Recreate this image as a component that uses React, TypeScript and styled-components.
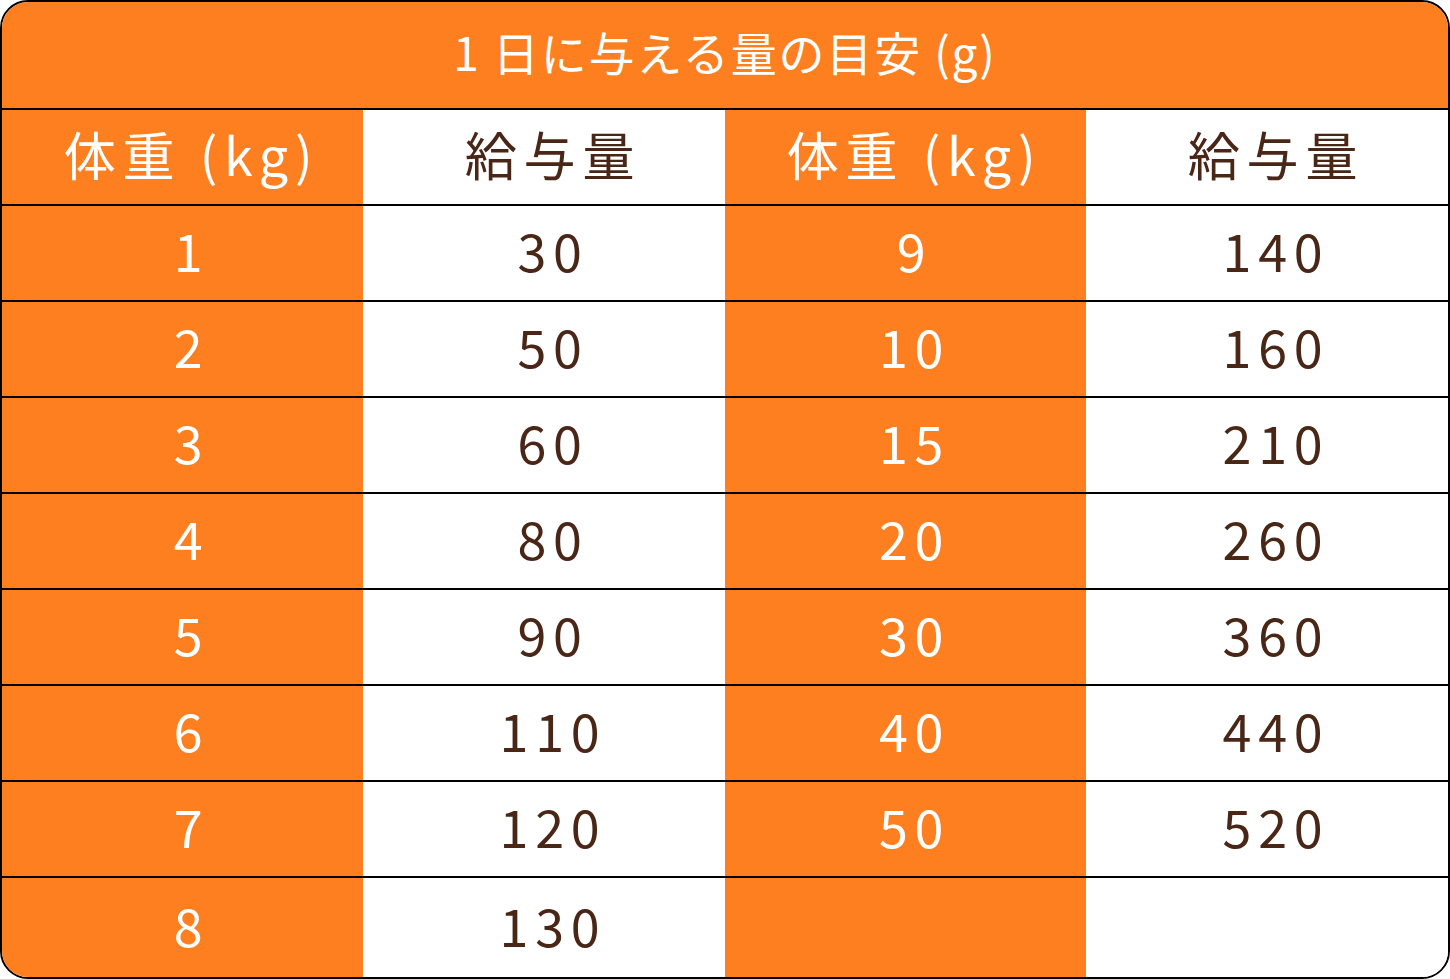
import styled, { createGlobalStyle } from "styled-components";

const GlobalStyle = createGlobalStyle`
  html, body {
    margin: 0;
    padding: 0;
    background: #ffffff;
  }
  body {
    font-family: "Noto Sans CJK JP", "Noto Sans", sans-serif;
  }
`;

const ORANGE = "#fe7f1f";
const BROWN = "#4a2616";

type Row = {
  weightA: string;
  amountA: string;
  weightB: string;
  amountB: string;
};

const rows: Row[] = [
  { weightA: "1", amountA: "30", weightB: "9", amountB: "140" },
  { weightA: "2", amountA: "50", weightB: "10", amountB: "160" },
  { weightA: "3", amountA: "60", weightB: "15", amountB: "210" },
  { weightA: "4", amountA: "80", weightB: "20", amountB: "260" },
  { weightA: "5", amountA: "90", weightB: "30", amountB: "360" },
  { weightA: "6", amountA: "110", weightB: "40", amountB: "440" },
  { weightA: "7", amountA: "120", weightB: "50", amountB: "520" },
  { weightA: "8", amountA: "130", weightB: "", amountB: "" },
];

export default function App() {
  return (
    <>
      <GlobalStyle />
      <Table>
        <Title>1 日に与える量の目安 (g)</Title>
        <Row>
          <Cell $kind="weight">体重 (kg)</Cell>
          <Cell $kind="amount">給与量</Cell>
          <Cell $kind="weight">体重 (kg)</Cell>
          <Cell $kind="amount">給与量</Cell>
        </Row>
        {rows.map((row, i) => (
          <Row key={i} $last={i === rows.length - 1}>
            <Cell $kind="weight">{row.weightA}</Cell>
            <Cell $kind="amount">{row.amountA}</Cell>
            <Cell $kind="weight">{row.weightB}</Cell>
            <Cell $kind="amount">{row.amountB}</Cell>
          </Row>
        ))}
      </Table>
    </>
  );
}

const Table = styled.div`
  box-sizing: border-box;
  width: 1450px;
  height: 979px;
  border: 2px solid #000;
  border-radius: 28px;
  overflow: hidden;
  display: flex;
  flex-direction: column;
  background: #fff;
`;

const Title = styled.div`
  box-sizing: border-box;
  height: 108px;
  flex-shrink: 0;
  display: flex;
  align-items: center;
  justify-content: center;
  padding: 0 0 8px 0;
  background: ${ORANGE};
  color: #fff;
  font-size: 46px;
  letter-spacing: 0.04em;
  border-bottom: 2px solid #000;
`;

const Row = styled.div<{ $last?: boolean }>`
  display: grid;
  grid-template-columns: 361px 362px 361px 1fr;
  height: ${(p) => (p.$last ? "auto" : "94px")};
  flex: ${(p) => (p.$last ? "1" : "0 0 auto")};
  border-bottom: ${(p) => (p.$last ? "none" : "2px solid #000")};
`;

const Cell = styled.div<{ $kind: "weight" | "amount" }>`
  box-sizing: border-box;
  display: flex;
  align-items: center;
  justify-content: center;
  padding: 0 0 6px 18px;
  background: ${(p) => (p.$kind === "weight" ? ORANGE : "#fff")};
  color: ${(p) => (p.$kind === "weight" ? "#fff" : BROWN)};
  font-size: 52px;
  letter-spacing: 0.13em;
  line-height: 1;
  white-space: pre;
`;
